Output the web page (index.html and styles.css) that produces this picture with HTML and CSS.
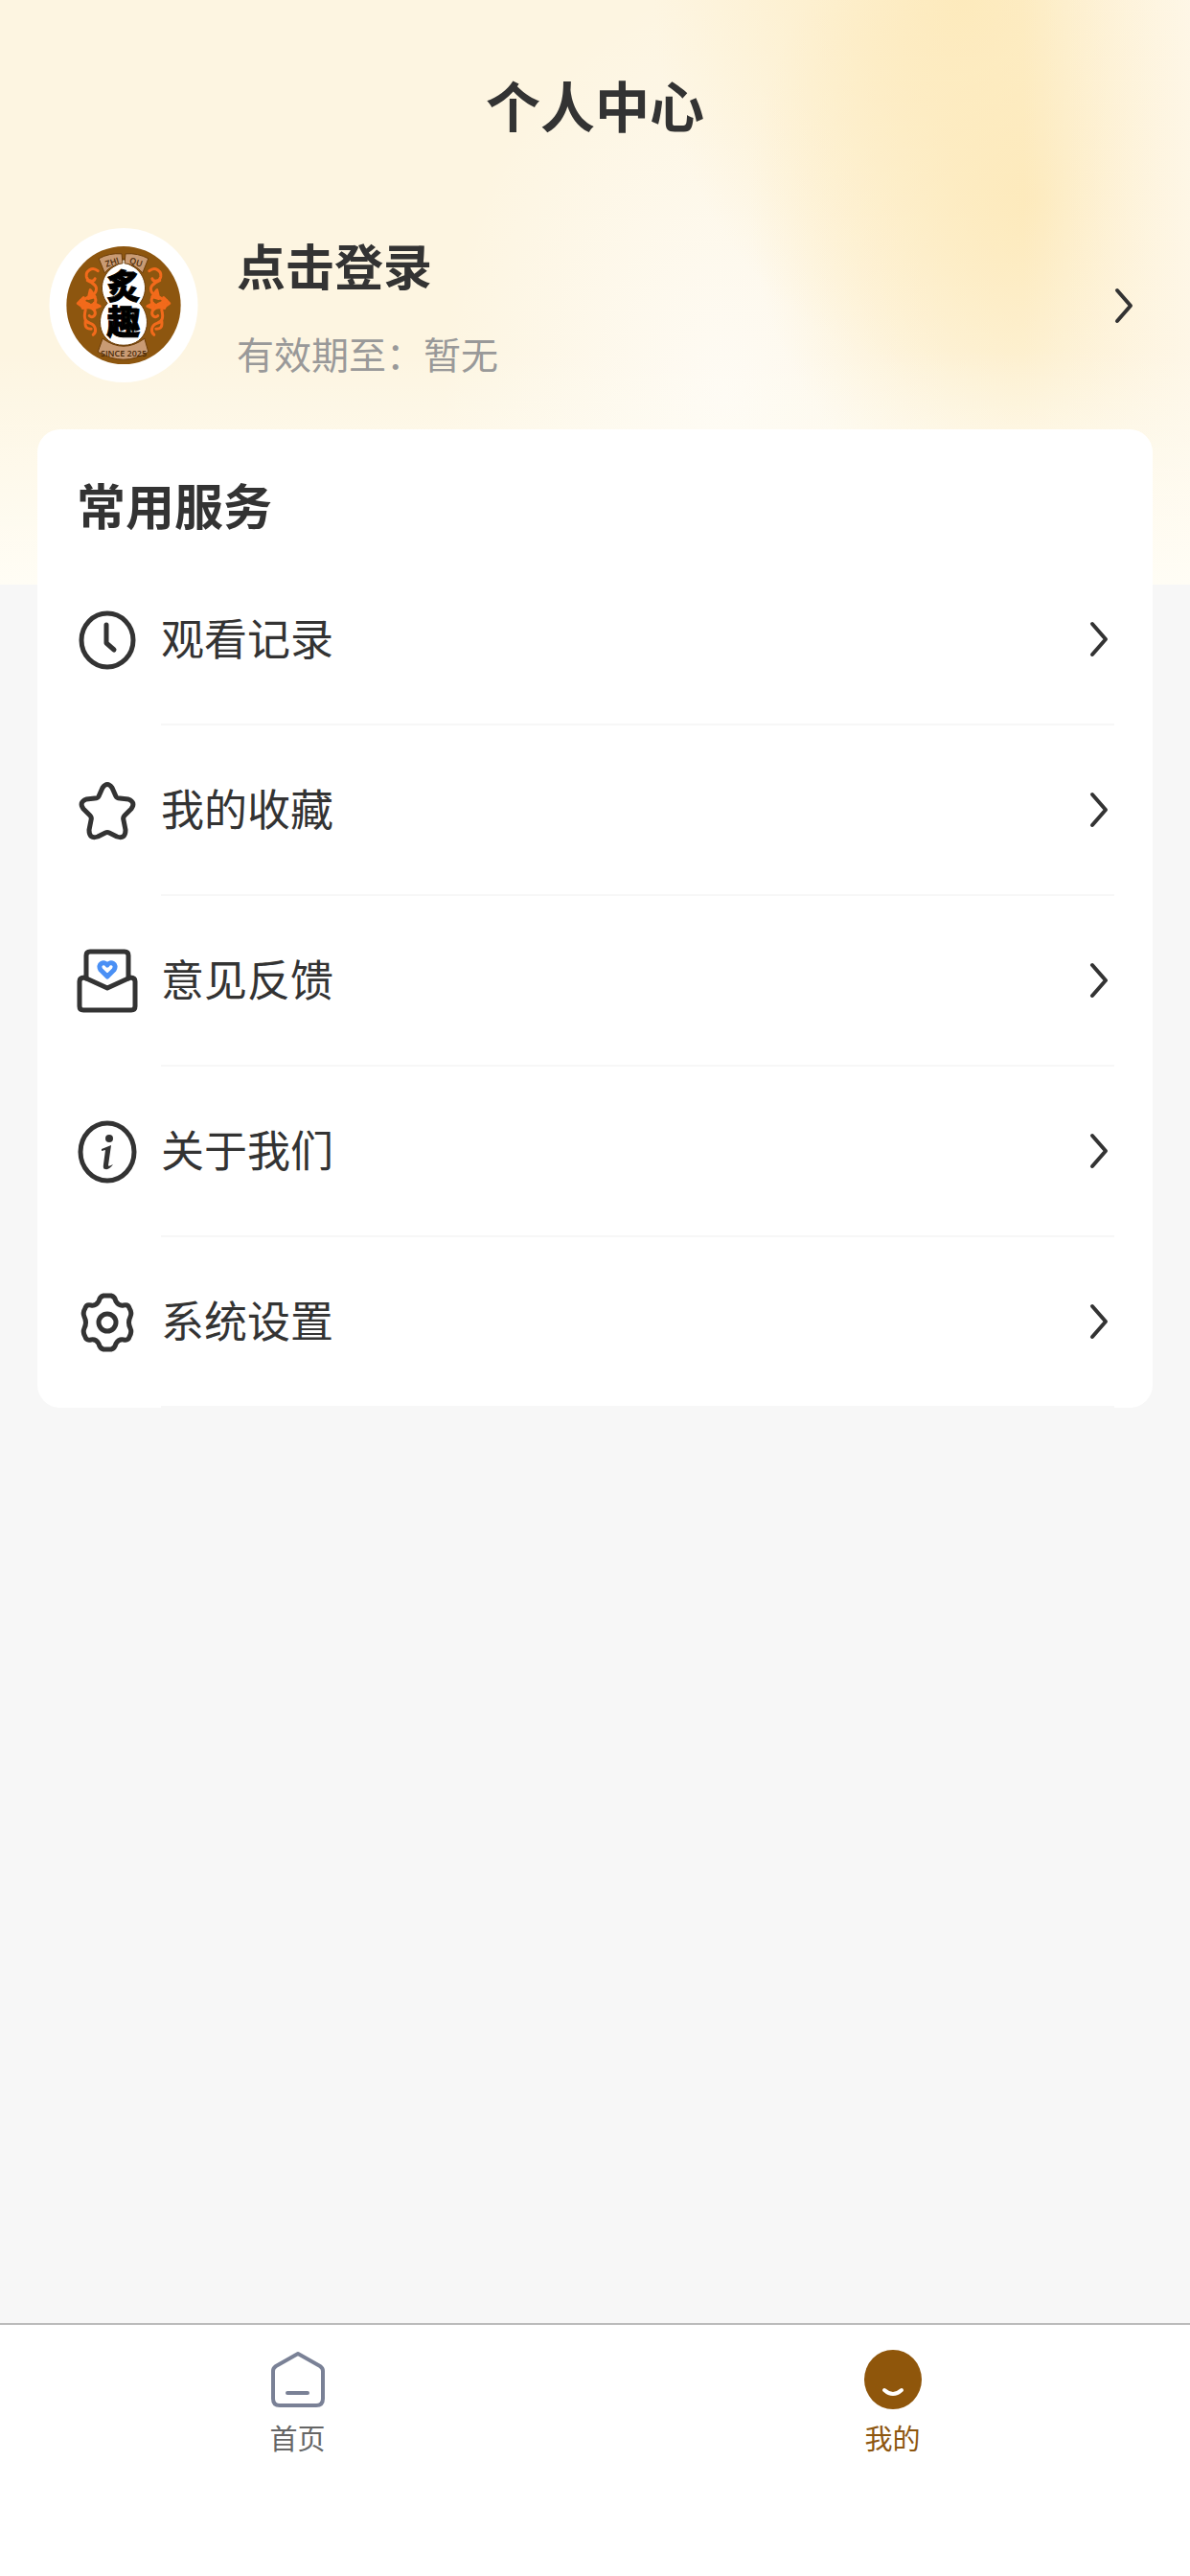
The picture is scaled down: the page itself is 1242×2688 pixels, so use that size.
FILE: index.html
```html
<!DOCTYPE html>
<html lang="zh-CN">
<head>
    <meta charset="UTF-8">
    <meta name="viewport" content="width=device-width, initial-scale=1.0">
    <title>个人中心</title>
    <link rel="stylesheet" href="styles.css">
</head>
<body>

    <header class="header">
        <h1 class="page-title">个人中心</h1>
        <a class="profile" href="#login">
            <svg class="avatar" viewBox="0 0 156 163" aria-hidden="true">
                <ellipse cx="78" cy="81" rx="78" ry="81" fill="#fff"/>
                <ellipse cx="78" cy="81" rx="60" ry="62" fill="#8d560f"/>
                <!-- flame ornaments -->
                <g id="flame" fill="none" stroke="#f26a1b" stroke-width="3" stroke-linecap="round" stroke-linejoin="round">
                    <path d="M51 45c-6-5-13 0-12 6 1 5 8 6 9 2M40 55c7 3 12 7 8 13-3 5-9 3-13 9"/>
                    <path d="M30 79l6-6c0 6 3 9 8 8s6-6 3-9M30 79l7 5c5-2 10 0 11 4s-3 7-6 4"/>
                    <path d="M38 86c-2 8-1 12 5 14s7 9 3 12M38 97c-1 7 1 9 6 9"/>
                    <path d="M33 76l9 4-7 4zM43 65l5 7-7 2zM47 79l6 3-7 3z" fill="#f26a1b"/>
                </g>
                <use href="#flame" transform="matrix(-1 0 0 1 156 0)"/>
                <path d="M78 32c2 5 6 6 11 9 12 8 16 25 6 38 14 15 9 44-17 44s-31-29-17-44c-10-13-6-30 6-38 5-3 9-4 11-9z" fill="#fff" stroke="#6b3c08" stroke-width="1"/>
                <g fill="#c99b74" stroke="#6b3c08" stroke-width="1">
                    <path d="M52 32q11-6 24-5l1 10q-11 1-19 10z"/>
                    <path d="M104 32q-11-6-24-5l-1 10q11 1 19 10z"/>
                    <path d="M56 116q22 16 44 0l4 14q-26 16-53 0z"/>
                </g>
                <g class="logo-latin">
                    <text x="66" y="39" transform="rotate(-17 66 36)">ZHI</text>
                    <text x="91" y="39" transform="rotate(17 91 36)">QU</text>
                    <text x="78" y="135">SINCE 2025</text>
                </g>
                <text class="logo-name"><tspan x="78" y="74">炙</tspan><tspan x="78" y="112">趣</tspan></text>
            </svg>
            <span class="profile-text">
                <strong class="profile-name">点击登录</strong>
                <span class="profile-date">有效期至：暂无</span>
            </span>
            <svg class="arrow" viewBox="0 0 20 38" aria-hidden="true"><path d="M3 3l14 16L3 35"/></svg>
        </a>
    </header>

    <main class="main">
        <section class="card">
            <h2 class="card-title">常用服务</h2>
            <ul class="menu">
                <li>
                    <a class="menu-item" href="#history">
                        <svg class="icon" viewBox="0 0 64 68" aria-hidden="true">
                            <ellipse cx="32" cy="34" rx="27" ry="28"/>
                            <path d="M31 18v19l8 7"/>
                        </svg>
                        <span class="menu-body">
                            <span class="menu-label">观看记录</span>
                            <svg class="arrow" viewBox="0 0 20 38" aria-hidden="true"><path d="M3 3l14 16L3 35"/></svg>
                        </span>
                    </a>
                </li>
                <li>
                    <a class="menu-item" href="#favorites">
                        <svg class="icon" viewBox="0 0 64 68" aria-hidden="true">
                            <path d="M27 10Q32 3 37 10L41 19Q42 21 45 21L54 22Q62 25 57 32L50 39Q48 41 49 44L51 54Q51 64 42 61L34 57Q32 56 30 57L22 61Q13 64 13 54L15 44Q16 41 14 39L7 32Q2 25 10 22L19 21Q22 21 23 19Z"/>
                        </svg>
                        <span class="menu-body">
                            <span class="menu-label">我的收藏</span>
                            <svg class="arrow" viewBox="0 0 20 38" aria-hidden="true"><path d="M3 3l14 16L3 35"/></svg>
                        </span>
                    </a>
                </li>
                <li>
                    <a class="menu-item" href="#feedback">
                        <svg class="icon" viewBox="0 0 64 68" aria-hidden="true">
                            <path d="M10 31V7q0-4 4-4h36q4 0 4 4v24"/>
                            <path d="M8 30q-5 0-5 4v26q0 4 4 4h50q4 0 4-4V34q0-4-5-4L32 41z"/>
                            <path class="heart" d="M32 29l-7-7c-4-6 4-10 7-5 3-5 11-1 7 5z"/>
                        </svg>
                        <span class="menu-body">
                            <span class="menu-label">意见反馈</span>
                            <svg class="arrow" viewBox="0 0 20 38" aria-hidden="true"><path d="M3 3l14 16L3 35"/></svg>
                        </span>
                    </a>
                </li>
                <li>
                    <a class="menu-item" href="#about">
                        <svg class="icon" viewBox="0 0 64 68" aria-hidden="true">
                            <ellipse cx="32" cy="34" rx="28" ry="30"/>
                            <circle class="solid" cx="34" cy="20" r="4"/>
                            <path class="solid" d="M26 31l10-4-3 21q0 2 5-1-4 6-8 5-3 0-2-5l2-15-4 1z"/>
                        </svg>
                        <span class="menu-body">
                            <span class="menu-label">关于我们</span>
                            <svg class="arrow" viewBox="0 0 20 38" aria-hidden="true"><path d="M3 3l14 16L3 35"/></svg>
                        </span>
                    </a>
                </li>
                <li>
                    <a class="menu-item" href="#settings">
                        <svg class="icon" viewBox="0 0 64 68" aria-hidden="true">
                            <path d="M28 6h8q4 1 5 6 3 5 8 4 5-1 6 3 3 5 1 9-3 6 0 12 2 4-1 9-1 4-6 3-5-1-8 4-1 5-5 6h-8q-4-1-5-6-3-5-8-4-5 1-6-3-3-5-1-9 3-6 0-12-2-4 1-9 1-4 6-3 5 1 8-4 1-5 5-6z"/>
                            <circle cx="32" cy="34" r="9"/>
                        </svg>
                        <span class="menu-body">
                            <span class="menu-label">系统设置</span>
                            <svg class="arrow" viewBox="0 0 20 38" aria-hidden="true"><path d="M3 3l14 16L3 35"/></svg>
                        </span>
                    </a>
                </li>
            </ul>
        </section>
    </main>

    <nav class="tabbar">
        <a class="tab" href="#home">
            <svg class="tab-icon" viewBox="0 0 64 64" aria-hidden="true">
                <path d="M32 5L9 18q-3 2-3 5v29q0 7 7 7h38q7 0 7-7V23q0-3-3-5zM21 46h21"/>
            </svg>
            首页
        </a>
        <a class="tab active" href="#me" aria-current="page">
            <svg class="tab-icon" viewBox="0 0 64 64" aria-hidden="true">
                <ellipse class="face" cx="32" cy="32" rx="30" ry="31"/>
                <path class="smile" d="M23 43q9 8 18 0"/>
            </svg>
            我的
        </a>
    </nav>

</body>
</html>
```
FILE: styles.css
```css
* {
    box-sizing: border-box;
}
body {
    margin: 0;
    min-height: 100vh;
    display: flex;
    flex-direction: column;
    background: #f7f7f7;
    color: #333;
    font-family: "Noto Sans CJK SC", "Noto Sans", sans-serif;
}
a {
    color: inherit;
    text-decoration: none;
}
h1, h2, ul {
    margin: 0;
    padding: 0;
}
.header {
    padding: 68px 48px 162px;
    background:
        linear-gradient(to bottom, rgba(255, 253, 245, 0) 60%, #fffdf5 100%),
        linear-gradient(to left, rgba(254, 247, 232, 0.9), rgba(254, 247, 232, 0) 14%),
        radial-gradient(ellipse 24% 56% at 87% 34%, rgba(253, 232, 182, 0.8) 0%, rgba(253, 234, 188, 0.5) 45%, rgba(253, 234, 188, 0) 100%),
        radial-gradient(ellipse 26% 64% at 81% 0%, rgba(253, 232, 182, 0.85) 0%, rgba(253, 234, 188, 0.5) 45%, rgba(253, 234, 188, 0) 100%),
        radial-gradient(ellipse 24% 70% at 61% 68%, #fefbf4 0%, rgba(254, 250, 242, 0) 100%),
        #fdf5e1;
}
.page-title {
    font-size: 57px;
    line-height: 80px;
    font-weight: 600;
    text-align: center;
}
.profile {
    display: flex;
    align-items: center;
    margin-top: 90px;
    margin-bottom: 48px;
    padding-right: 11px;
}
.avatar {
    width: 162px;
    height: 162px;
    margin-right: 37px;
}
.logo-latin {
    font-family: "Open Sans", sans-serif;
    font-size: 9px;
    font-weight: 600;
    fill: #4a2a08;
    text-anchor: middle;
}
.logo-name {
    font-size: 35px;
    font-weight: 900;
    fill: #000;
    stroke: #000;
    stroke-width: 1;
    text-anchor: middle;
}
.profile-text {
    flex: 1;
    display: flex;
    flex-direction: column;
    gap: 26px;
}
.profile-name {
    font-size: 51px;
    line-height: 72px;
    font-weight: 700;
}
.profile-date {
    font-size: 39px;
    line-height: 60px;
    color: #999;
}
.arrow {
    width: 20px;
    height: 38px;
    fill: none;
    stroke: #333;
    stroke-width: 4;
    stroke-linecap: round;
    stroke-linejoin: round;
}
.main {
    flex: 1;
    padding: 0 39px;
}
.card {
    margin-top: -162px;
    padding: 42px 40px 0 41px;
    background: #fff;
    border-radius: 24px;
}
.card-title {
    font-size: 51px;
    line-height: 72px;
    font-weight: 700;
    margin-bottom: 17px;
}
.menu {
    list-style: none;
}
.menu-item {
    display: flex;
    align-items: center;
    gap: 24px;
}
.icon {
    width: 64px;
    height: 68px;
    fill: none;
    stroke: #333;
    stroke-width: 5;
    stroke-linecap: round;
    stroke-linejoin: round;
}
.icon .heart {
    stroke: #4a90f5;
}
.icon .solid {
    fill: #333;
    stroke: none;
}
.menu-body {
    flex: 1;
    display: flex;
    align-items: center;
    justify-content: space-between;
    height: 178px;
    padding-right: 6px;
    border-bottom: 2px solid #f7f7f7;
}
.menu-label {
    font-size: 45px;
    padding-bottom: 6px;
}
.tabbar {
    display: flex;
    height: 264px;
    padding-top: 25px;
    background: #fff;
    border-top: 2px solid #bbb;
}
.tab {
    flex: 1;
    display: flex;
    flex-direction: column;
    align-items: center;
    font-size: 29px;
    line-height: 40px;
    gap: 8px;
    color: #666;
}
.tab.active {
    color: #8d560f;
}
.tab-icon {
    width: 64px;
    height: 64px;
    fill: none;
    stroke: #7a8196;
    stroke-width: 4;
    stroke-linecap: round;
    stroke-linejoin: round;
}
.tab-icon .face {
    fill: #8f560b;
    stroke: none;
}
.tab-icon .smile {
    stroke: #fff;
}
```
